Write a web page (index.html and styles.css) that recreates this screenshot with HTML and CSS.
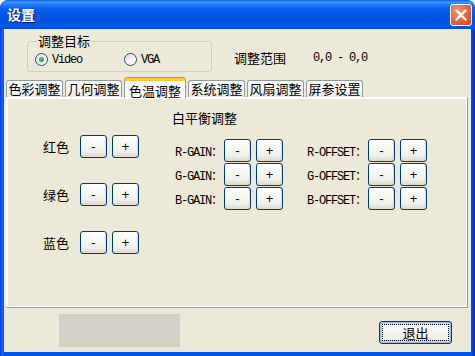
FILE: index.html
```html
<!DOCTYPE html>
<html lang="zh-CN">
<head>
  <meta charset="UTF-8">
  <title>设置</title>
  <link rel="stylesheet" href="styles.css">
</head>
<body>
<div class="window">
  <div class="titlebar">
    <span class="title">设置</span>
    <span class="close">
      <svg width="12" height="12" viewBox="0 0 12 12"><path d="M1.5 1.5 L10.5 10.5 M10.5 1.5 L1.5 10.5" stroke="#fff" stroke-width="2.2" stroke-linecap="square"/></svg>
    </span>
  </div>

  <div class="client">
    <div class="top">
      <fieldset class="group">
        <legend>调整目标</legend>
        <label class="radio radio--video"><span class="radio__dot radio__dot--on"></span><span class="mono">Video</span></label>
        <label class="radio"><span class="radio__dot"></span><span class="mono">VGA</span></label>
      </fieldset>
      <div class="range">
        <span>调整范围</span>
        <span class="mono">0,0 - 0,0</span>
      </div>
    </div>

    <div class="tabs">
      <div class="tab">色彩调整</div>
      <div class="tab">几何调整</div>
      <div class="tab tab--active">色温调整</div>
      <div class="tab">系统调整</div>
      <div class="tab">风扇调整</div>
      <div class="tab">屏参设置</div>
    </div>

    <div class="panel">
      <div class="colors">
        <div class="row"><span class="row__label">红色</span><button class="btn">-</button><button class="btn">+</button></div>
        <div class="row"><span class="row__label">绿色</span><button class="btn">-</button><button class="btn">+</button></div>
        <div class="row"><span class="row__label">蓝色</span><button class="btn">-</button><button class="btn">+</button></div>
      </div>

      <div class="balance">
        <div class="balance__title">白平衡调整</div>
        <div class="balance__cols">
          <div class="gain">
            <div class="row"><span class="row__label mono">R-GAIN<span class="cjk">：</span></span><button class="btn">-</button><button class="btn">+</button></div>
            <div class="row"><span class="row__label mono">G-GAIN<span class="cjk">：</span></span><button class="btn">-</button><button class="btn">+</button></div>
            <div class="row"><span class="row__label mono">B-GAIN<span class="cjk">：</span></span><button class="btn">-</button><button class="btn">+</button></div>
          </div>
          <div class="offset">
            <div class="row"><span class="row__label mono">R-OFFSET<span class="cjk">：</span></span><button class="btn">-</button><button class="btn">+</button></div>
            <div class="row"><span class="row__label mono">G-OFFSET<span class="cjk">：</span></span><button class="btn">-</button><button class="btn">+</button></div>
            <div class="row"><span class="row__label mono">B-OFFSET<span class="cjk">：</span></span><button class="btn">-</button><button class="btn">+</button></div>
          </div>
        </div>
      </div>
    </div>

    <div class="footer">
      <div class="placeholder"></div>
      <button class="btn btn--default">退出</button>
    </div>
  </div>
</div>
</body>
</html>
```

FILE: styles.css
```css
html, body {
  margin: 0;
  padding: 0;
  background: #fff;
}
body {
  font-family: "Noto Sans CJK SC", "Liberation Sans", sans-serif;
  font-size: 12px;
  color: #000;
}
.mono {
  font-family: "Liberation Mono", "Noto Sans CJK SC", monospace;
  font-size: 12px;
  letter-spacing: -1.2px;
}
.cjk {
  font-family: "Noto Sans CJK SC", sans-serif;
  font-size: 12px;
  letter-spacing: 0;
}

.window {
  width: 475px;
  height: 356px;
  box-sizing: border-box;
  display: flex;
  flex-direction: column;
  border-radius: 8px 8px 0 0;
  background: linear-gradient(to right, #0831d9 0, #166aee 2px, #0055ea 4px, #0055ea 471px, #0041cf 473px, #002fb8 475px);
  padding: 0 4px 4px 4px;
  overflow: hidden;
}

/* title bar */
.titlebar {
  height: 29px;
  margin: 0 -4px;
  padding: 0 3px 0 7px;
  display: flex;
  align-items: center;
  justify-content: space-between;
  border-radius: 8px 8px 0 0;
  background: linear-gradient(to bottom, #0a5fd8 0, #3d95ff 2px, #2a80fa 4px, #0961f0 8px, #0055e5 14px, #0053e2 22px, #005aeb 26px, #0048d0 29px);
}
.title {
  color: #fff;
  font-weight: bold;
  font-size: 14px;
  text-shadow: 1px 1px 0 #0a1e6a;
  margin-top: -1px;
}
.close {
  width: 22px;
  height: 22px;
  box-sizing: border-box;
  display: flex;
  align-items: center;
  justify-content: center;
  border: 1px solid #fff;
  border-radius: 3px;
  background: radial-gradient(circle at 35% 30%, #f49a7e 0, #e56a45 45%, #d0401c 100%);
}

/* client area */
.client {
  flex: 1;
  background: #ece9d8;
  display: flex;
  flex-direction: column;
}
.top {
  height: 49px;
  display: flex;
  align-items: flex-start;
}
.group {
  width: 185px;
  box-sizing: border-box;
  margin: 5px 0 0 23px;
  padding: 4px 7px 4px;
  border: 1px solid #d0d0bf;
  border-radius: 3px;
  display: flex;
  align-items: center;
}
.group legend {
  padding: 0 1px;
  margin-left: 2px;
  line-height: 14px;
  font-size: 13px;
}
.radio {
  display: flex;
  align-items: center;
  gap: 4px;
  height: 15px;
}
.radio--video {
  margin-right: 42px;
}
.radio__dot {
  width: 13px;
  height: 13px;
  box-sizing: border-box;
  border-radius: 50%;
  border: 1px solid #1c5180;
  background: linear-gradient(135deg, #dcdcd7 0, #f4f3ee 50%, #fff 100%);
  display: flex;
  align-items: center;
  justify-content: center;
}
.radio__dot--on::after {
  content: "";
  width: 5px;
  height: 5px;
  border-radius: 50%;
  background: radial-gradient(circle at 40% 40%, #55d755 0, #21a121 70%);
}
.range {
  margin: 22px 0 0 22px;
  display: flex;
  align-items: center;
  gap: 27px;
  line-height: 14px;
  font-size: 13px;
}

/* tabs */
.tabs {
  height: 19px;
  display: flex;
  align-items: flex-end;
  padding-left: 2px;
  gap: 2px;
}
.tab {
  height: 17px;
  box-sizing: border-box;
  width: 57px;
  text-align: center;
  line-height: 16px;
  font-size: 13px;
  border: 1px solid #919b9c;
  border-bottom: none;
  border-radius: 3px 3px 0 0;
  background: linear-gradient(to bottom, #fff 0, #f7f7f5 50%, #ecebe6 100%);
}
.tab--active {
  position: relative;
  z-index: 1;
  width: 62px;
  height: 20px;
  margin-bottom: -1px;
  padding-top: 2px;
  border-top: 3px solid #ffc83c;
  box-shadow: 0 -1px 0 #e68b2c;
  background: #fcfcfe;
}

/* panel */
.panel {
  height: 211px;
  width: 462px;
  box-sizing: border-box;
  margin-left: 2px;
  border: 1px solid #919b9c;
  border-top-color: #fff;
  border-left-color: #fff;
  box-shadow: inset 1px 1px 0 #fcfcfe, inset -1px -1px 0 #fff;
  display: flex;
  align-items: flex-start;
}
.colors {
  margin: 37px 0 0 36px;
  display: flex;
  flex-direction: column;
  gap: 25px;
}
.colors .row__label {
  width: 37px;
}
.row {
  display: flex;
  align-items: center;
  gap: 5px;
  height: 23px;
}
.row__label {
  flex: none;
  white-space: nowrap;
  margin-right: -5px;
  font-size: 13px;
}
.row__label.mono {
  font-size: 12px;
}
.balance {
  margin: 13px 0 0 33px;
}
.balance__title {
  line-height: 14px;
  font-size: 13px;
}
.balance__cols {
  margin-top: 14px;
  display: flex;
  gap: 24px;
}
.gain, .offset {
  display: flex;
  flex-direction: column;
  gap: 1px;
}
.gain {
  margin-left: 3px;
}
.gain .row__label {
  width: 49px;
}
.offset .row__label {
  width: 61px;
}

/* buttons */
.btn {
  width: 27px;
  height: 23px;
  box-sizing: border-box;
  padding: 0;
  border: 1px solid #003c74;
  border-radius: 3px;
  background: linear-gradient(to bottom, #fff 0, #f8f8f4 40%, #f0efe8 75%, #e3e0d6 92%, #d6d0c5 100%);
  box-shadow: inset -1px -1px 0 #e0dcd0;
  font-family: "Liberation Sans", sans-serif;
  font-size: 13px;
  color: #000;
  line-height: 20px;
}

/* footer */
.footer {
  flex: 1;
  display: flex;
  align-items: flex-start;
}
.placeholder {
  width: 121px;
  height: 33px;
  margin: 6px 0 0 55px;
  background: #d4d0c8;
}
.btn--default {
  position: relative;
  width: 73px;
  height: 23px;
  margin: 13px 19px 0 auto;
  box-shadow: inset 0 0 0 1px #98b8ea, inset 0 0 0 2px #c1d3fb;
  font-family: "Noto Sans CJK SC", sans-serif;
  font-size: 13px;
  line-height: 19px;
}
.btn--default::after {
  content: "";
  position: absolute;
  inset: 2px;
  border: 1px dotted #000;
}
```
